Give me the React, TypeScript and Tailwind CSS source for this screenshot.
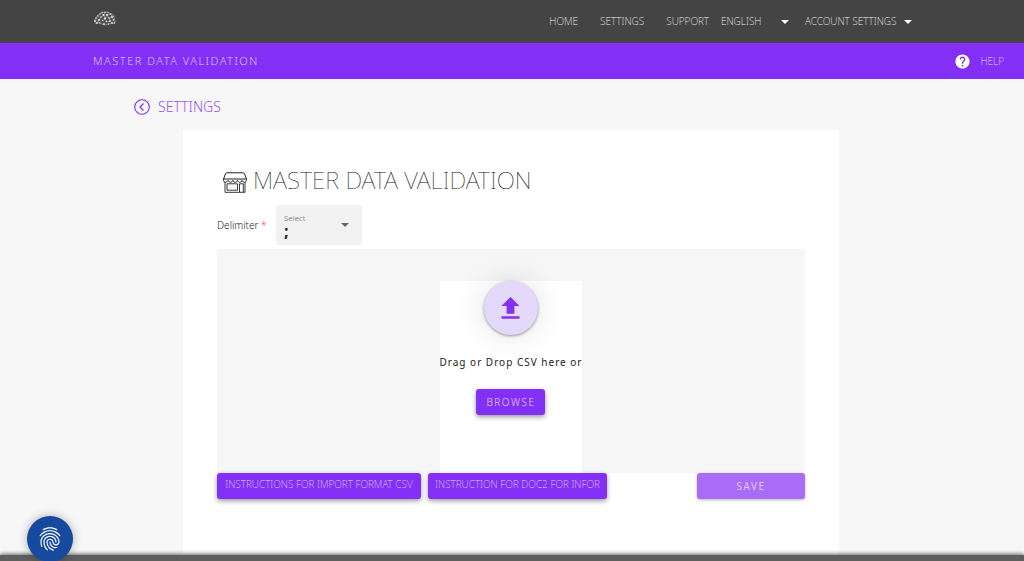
import { MdFingerprint, MdHelp } from "react-icons/md";

const dots: [number, number, number][] = [
  [2, 10, 0.9], [3, 7, 0.7], [4, 12, 0.9], [5, 5, 0.8], [6, 9, 1], [7, 3, 0.7], [7, 12, 0.7],
  [8, 6, 0.8], [9, 1.5, 0.7], [9.5, 9.5, 0.8], [10.5, 4, 1], [11, 13, 0.9], [12, 1.5, 0.7],
  [12, 7.5, 1.1], [13.5, 10.5, 0.8], [14, 4, 1], [15, 1.8, 0.6], [15.5, 13, 0.7], [16, 7, 0.8],
  [17, 10, 1], [17.5, 3, 0.8], [19, 6, 0.9], [19, 12, 0.9], [20.5, 9, 0.8], [21.5, 12, 0.7], [21, 5, 0.6],
];

function BrainLogo() {
  return (
    <svg viewBox="0 0 24 15" className="h-[15px] w-6" aria-label="Logo" role="img">
      <path
        d="M2 12 2 8 5 4 10 1h5l5 3 2 5v3l-6 1-5 1-5-2zM3 7l3 2 2-3 3-2 1 4 2-4 4-1 1 3 2 3M6 9l-2 3M10 10l2-3 2 4 3-1-1-3 3-1M9 2l2 2 1-3M14 4l2 3"
        fill="#fff"
        fillOpacity=".15"
        stroke="#fff"
        strokeWidth=".6"
        opacity=".5"
      />
      {dots.map(([x, y, r]) => (
        <circle key={`${x}-${y}`} cx={x} cy={y} r={r} fill="#fff" opacity=".85" />
      ))}
    </svg>
  );
}

function ShopIcon() {
  return (
    <svg viewBox="0 0 24 21" className="h-[21px] w-6 shrink-0" fill="none" stroke="#222" aria-hidden="true">
      <path d="M4 .8h16q1 0 1.500 1L23.500 7H.5l2-5.200q.5-1 1.500-1z" strokeWidth="1" />
      <path d="M.5 7v1.500q.3 1.800 2 1.800t2.600-2q.7 2 2.400 2t2.300-2q.6 2 2.300 2t2.300-2q.6 2 2.300 2t2.300-2q.8 2 2.400 2t2-1.800V7" strokeWidth=".9" />
      <path d="M2 10v10.300h20V10M4 11.800h10.500v6.400H4zM16.500 20v-8.200h3.800V20" strokeWidth=".9" />
    </svg>
  );
}

function Caret({ className }: { className: string }) {
  return (
    <svg viewBox="0 0 8 4" className={`h-1 w-2 ${className}`} fill="currentColor" aria-hidden="true">
      <path d="M0 0h8L4 4z" />
    </svg>
  );
}

const raised =
  "h-[26px] rounded-[3px] bg-[#832ff5] text-[#e6d5fe] shadow-[0_2px_5px_rgba(0,0,0,0.4)]";

export default function App() {
  return (
    <div className="flex min-h-screen flex-col bg-[#f7f7f7] font-['Noto_Sans','Liberation_Sans',sans-serif] text-[10px] font-light text-[#222]">
      <header className="flex h-[43px] items-center justify-between bg-[#444] pr-[112px] pl-[93px]">
        <a href="#home" className="mb-[6px]">
          <BrainLogo />
        </a>
        <nav className="flex items-center font-extralight text-[#f4f4f4]">
          <a href="#home" className="mr-[22px]">HOME</a>
          <a href="#settings" className="mr-[22px]">SETTINGS</a>
          <a href="#support" className="mr-3">SUPPORT</a>
          <button type="button" className="mr-4 flex w-[68px] items-center justify-between">
            ENGLISH <Caret className="text-white" />
          </button>
          <button type="button" className="flex w-[107px] items-center justify-between">
            ACCOUNT SETTINGS <Caret className="text-white" />
          </button>
        </nav>
      </header>

      <div className="flex h-9 items-center justify-between bg-[#832ff5] pr-5 pl-[93px] text-[#dcc4fd]">
        <span className="text-[11px] tracking-[1.500px]">MASTER DATA VALIDATION</span>
        <a href="#help" className="flex items-center gap-[9px] font-extralight text-[#e6d5fe]">
          <MdHelp className="size-[17px] text-white" />
          HELP
        </a>
      </div>

      <main className="flex flex-1 flex-col pr-[185px] pl-[183px]">
        <a
          href="#settings"
          className="-ml-[49px] flex h-[51px] items-center gap-2 self-start pt-1 text-[14px] text-[#9a55f5]"
        >
          <svg viewBox="0 0 16 16" className="size-4" fill="none" stroke="#832ff5" aria-hidden="true">
            <circle cx="8" cy="8" r="7.300" strokeWidth="1.100" />
            <path d="M9.500 4.500 6 8l3.500 3.500" strokeWidth="1.200" />
          </svg>
          SETTINGS
        </a>

        <section className="flex-1 bg-white px-[34px] pt-[34px]">
          <h1 className="flex h-8 items-center gap-[6px] pl-[6px] text-[24px] font-thin text-[#111]">
            <span className="pt-1">
              <ShopIcon />
            </span>
            MASTER DATA VALIDATION
          </h1>

          <div className="mt-[9px] flex h-10 items-center">
            <label htmlFor="delimiter" className="w-[59px]">
              Delimiter <span className="text-[#f44336]">*</span>
            </label>
            <div className="relative h-10 w-[86px] rounded-[3px] bg-[#f1f1f1]">
              <span className="absolute top-2 left-2 text-[8px] leading-[10px] text-[#666]">Select</span>
              <select
                id="delimiter"
                defaultValue=";"
                className="h-full w-full appearance-none bg-transparent pt-3 pl-2 text-[16px] font-bold text-[#222]"
              >
                <option value=";">;</option>
                <option value=",">,</option>
              </select>
              <Caret className="pointer-events-none absolute top-[18px] right-[13px] text-[#666]" />
            </div>
          </div>

          <div className="mt-1 flex h-[224px] justify-center bg-[#f6f6f6] pt-8">
            <div className="flex flex-col items-center bg-white">
              <div className="flex size-[54px] items-center justify-center rounded-full bg-[#e4d8fb] shadow-[0_1px_3px_rgba(0,0,0,0.4),0_0_32px_rgba(0,0,0,0.12)]">
                <svg viewBox="0 0 24 24" className="size-[31px]" fill="#832ff5" aria-hidden="true">
                  <path d="M5 20h14v-2H5zM5 10h4v6h6v-6h4l-7-7z" />
                </svg>
              </div>
              <p className="mt-5 leading-[14px] font-normal tracking-[1px]">Drag or Drop CSV here or</p>
              <button type="button" className={`${raised} mt-5 w-[69px] tracking-[1.500px]`}>
                BROWSE
              </button>
            </div>
          </div>

          <div className="flex gap-[7px]">
            <button type="button" className={`${raised} w-[204px] pb-1 font-extralight`}>
              INSTRUCTIONS FOR IMPORT FORMAT CSV
            </button>
            <button type="button" className={`${raised} w-[179px] pb-1 font-extralight`}>
              INSTRUCTION FOR DOC2 FOR INFOR
            </button>
            <button
              type="button"
              className="ml-auto h-[26px] w-[108px] rounded-[3px] bg-[#a86cf7] font-normal tracking-[1.500px] text-[#dfc9fd] shadow-[0_1px_3px_rgba(0,0,0,0.3)]"
            >
              SAVE
            </button>
          </div>
        </section>
      </main>

      <footer className="h-[6px] bg-[#5e5e5e] shadow-[0_-1px_4px_rgba(0,0,0,0.6)]" />

      <button
        type="button"
        aria-label="Privacy settings"
        className="fixed -bottom-px left-[27px] flex size-[46px] items-center justify-center rounded-full bg-[#164a9f] text-white shadow-[0_0_10px_rgba(0,0,0,0.3)]"
      >
        <MdFingerprint className="size-7" />
      </button>
    </div>
  );
}
